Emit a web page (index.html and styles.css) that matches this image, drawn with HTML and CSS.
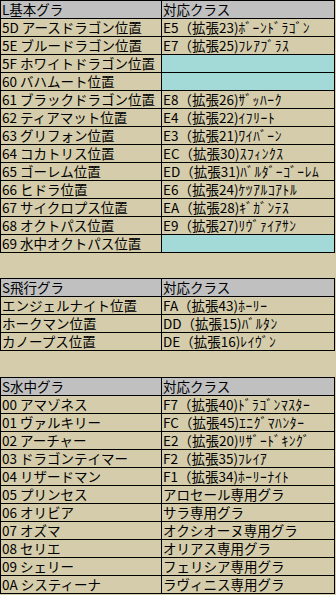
FILE: index.html
```html
<!DOCTYPE html>
<html lang="ja">
<head>
<meta charset="utf-8">
<link rel="stylesheet" href="styles.css">
</head>
<body>
<table class="sheet">
<colgroup><col class="c1"><col class="c2"></colgroup>
<tr class="head"><td>L基本グラ</td><td>対応クラス</td></tr>
<tr><td>5D アースドラゴン位置</td><td>E5（拡張23)<span class="hw">ﾎﾞｰﾝﾄﾞﾗｺﾞﾝ</span></td></tr>
<tr><td>5E ブルードラゴン位置</td><td>E7（拡張25)<span class="hw">ﾌﾚｱﾌﾞﾗｽ</span></td></tr>
<tr><td>5F ホワイトドラゴン位置</td><td class="empty"></td></tr>
<tr><td>60 バハムート位置</td><td class="empty"></td></tr>
<tr><td>61 ブラックドラゴン位置</td><td>E8（拡張26)<span class="hw">ｻﾞｯﾊｰｸ</span></td></tr>
<tr><td>62 ティアマット位置</td><td>E4（拡張22)<span class="hw">ｲﾌﾘｰﾄ</span></td></tr>
<tr><td>63 グリフォン位置</td><td>E3（拡張21)<span class="hw">ﾜｲﾊﾞｰﾝ</span></td></tr>
<tr><td>64 コカトリス位置</td><td>EC（拡張30)<span class="hw">ｽﾌｨﾝｸｽ</span></td></tr>
<tr><td>65 ゴーレム位置</td><td>ED（拡張31)<span class="hw">ﾊﾞﾙﾀﾞｰｺﾞｰﾚﾑ</span></td></tr>
<tr><td>66 ヒドラ位置</td><td>E6（拡張24)<span class="hw">ｹﾂｱﾙｺｱﾄﾙ</span></td></tr>
<tr><td>67 サイクロプス位置</td><td>EA（拡張28)<span class="hw">ｷﾞｶﾞﾝﾃｽ</span></td></tr>
<tr><td>68 オクトパス位置</td><td>E9（拡張27)<span class="hw">ﾘｳﾞｧｲｱｻﾝ</span></td></tr>
<tr><td>69 水中オクトパス位置</td><td class="empty"></td></tr>
</table>

<table class="sheet gap">
<colgroup><col class="c1"><col class="c2"></colgroup>
<tr class="head"><td>S飛行グラ</td><td>対応クラス</td></tr>
<tr><td>エンジェルナイト位置</td><td>FA（拡張43)<span class="hw">ﾎｰﾘｰ</span></td></tr>
<tr><td>ホークマン位置</td><td>DD（拡張15)<span class="hw">ﾊﾞﾙﾀﾝ</span></td></tr>
<tr><td>カノープス位置</td><td>DE（拡張16)<span class="hw">ﾚｲｳﾞﾝ</span></td></tr>
</table>

<table class="sheet gap">
<colgroup><col class="c1"><col class="c2"></colgroup>
<tr class="head"><td>S水中グラ</td><td>対応クラス</td></tr>
<tr><td>00 アマゾネス</td><td>F7（拡張40)<span class="hw">ﾄﾞﾗｺﾞﾝﾏｽﾀｰ</span></td></tr>
<tr><td>01 ヴァルキリー</td><td>FC（拡張45)<span class="hw">ｴﾆｸﾞﾏﾊﾝﾀｰ</span></td></tr>
<tr><td>02 アーチャー</td><td>E2（拡張20)<span class="hw">ﾘｻﾞｰﾄﾞｷﾝｸﾞ</span></td></tr>
<tr><td>03 ドラゴンテイマー</td><td>F2（拡張35)<span class="hw">ﾌﾚｲｱ</span></td></tr>
<tr><td>04 リザードマン</td><td>F1（拡張34)<span class="hw">ﾎｰﾘｰﾅｲﾄ</span></td></tr>
<tr><td>05 プリンセス</td><td>アロセール専用グラ</td></tr>
<tr><td>06 オリビア</td><td>サラ専用グラ</td></tr>
<tr><td>07 オズマ</td><td>オクシオーヌ専用グラ</td></tr>
<tr><td>08 セリエ</td><td>オリアス専用グラ</td></tr>
<tr><td>09 シェリー</td><td>フェリシア専用グラ</td></tr>
<tr><td>0A システィーナ</td><td>ラヴィニス専用グラ</td></tr>
</table>
</body>
</html>
```
FILE: styles.css
```css
html, body {
  margin: 0;
  padding: 0;
  background: #d4ccaa;
}
body {
  font-family: "Noto Sans CJK JP", "Noto Sans", sans-serif;
  font-size: 13.5px;
  color: #000;
}
.sheet {
  border-collapse: separate;
  border-spacing: 1px;
  background: #000;
  table-layout: fixed;
  width: 335px;
}
.sheet.gap {
  margin-top: 25px;
}
.sheet + .sheet + .sheet {
  margin-top: 26px;
}
.c1 { width: 160px; }
.c2 { width: 172px; }
.sheet td {
  height: 17px;
  padding: 0 0 0 1px;
  line-height: 17px;
  background: #d4ccaa;
  white-space: nowrap;
  vertical-align: middle;
}
.sheet .head td {
  background: #c0c0c0;
}
.sheet td.empty {
  background: #a3d9d6;
}
.hw {
  letter-spacing: 0.6px;
}
```
